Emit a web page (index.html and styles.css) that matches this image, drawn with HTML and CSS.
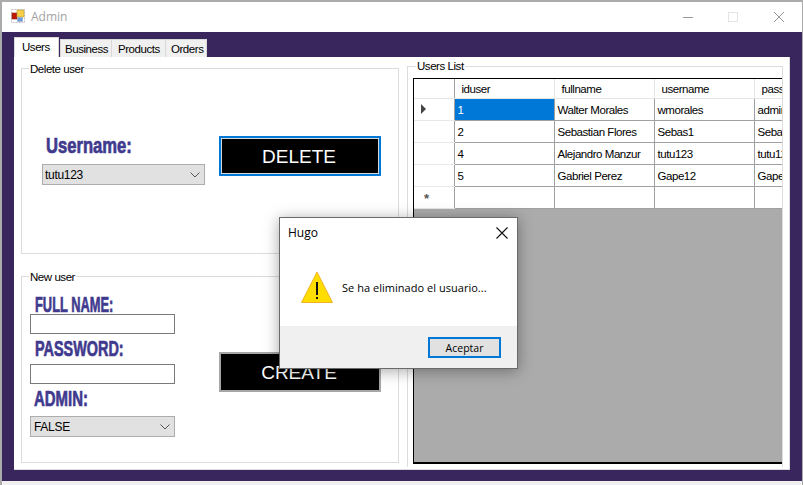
FILE: index.html
```html
<!doctype html>
<html lang="en">

<head>
    <meta charset="UTF-8">
    <title>Admin</title>
    <link rel="stylesheet" href="styles.css">
</head>

<body>
    <div class="window">
        <div class="titlebar">
            <svg class="app-icon" width="15" height="15" viewBox="0 0 15 15">
                <rect x="0.5" y="0.5" width="13" height="13" fill="none" stroke="#c4c4c4" stroke-dasharray="2 1"/>
                <rect x="1" y="4" width="5" height="6" fill="#c01808" stroke="#8c2010" stroke-width="0.6"/>
                <rect x="6" y="1" width="7" height="7" fill="#f8d048" stroke="#b89838" stroke-width="0.6"/>
                <rect x="6.5" y="8.5" width="5" height="4" fill="#6a9ce0" stroke="#98a8c0" stroke-width="0.6"/>
            </svg>
            <span class="app-title">Admin</span>
            <div class="window-controls">
                <svg width="10" height="10" viewBox="0 0 10 10"><path d="M0 5.5h10" stroke="#999"/></svg>
                <svg width="10" height="10" viewBox="0 0 10 10"><rect x="0.5" y="0.5" width="9" height="9" fill="none" stroke="#e4e4e4"/></svg>
                <svg class="close-icon" width="10" height="10" viewBox="0 0 10 10"><path d="M0 0l10 10M10 0L0 10" stroke="#999"/></svg>
            </div>
        </div>

        <div class="client">
            <div class="tabs">
                <div class="tab active">Users</div>
                <div class="tab">Business</div>
                <div class="tab">Products</div>
                <div class="tab">Orders</div>
            </div>

            <div class="panel">
                <div class="left-col">
                    <fieldset class="group delete-group">
                        <legend>Delete user</legend>
                        <div class="group-body">
                            <div class="field-col">
                                <div class="big-label username-label">Username:</div>
                                <div class="combo combo-wide"><span>tutu123</span><svg width="10" height="6" viewBox="0 0 10 6"><path d="M0.5 0.5L5 5l4.5-4.5" fill="none" stroke="#555"/></svg></div>
                            </div>
                            <button class="action-btn focused">DELETE</button>
                        </div>
                    </fieldset>

                    <fieldset class="group new-group">
                        <legend>New user</legend>
                        <div class="group-body">
                            <div class="field-col">
                                <div class="big-label fullname-label">FULL NAME:</div>
                                <input class="text-input" type="text">
                                <div class="big-label password-label">PASSWORD:</div>
                                <input class="text-input" type="text">
                                <div class="big-label admin-label">ADMIN:</div>
                                <div class="combo"><span>FALSE</span><svg width="10" height="6" viewBox="0 0 10 6"><path d="M0.5 0.5L5 5l4.5-4.5" fill="none" stroke="#555"/></svg></div>
                            </div>
                            <button class="action-btn create-btn">CREATE</button>
                        </div>
                    </fieldset>
                </div>

                <fieldset class="group list-group">
                    <legend>Users List</legend>
                    <div class="grid-view">
                        <table>
                            <thead>
                                <tr>
                                    <th class="row-head"></th>
                                    <th>iduser</th>
                                    <th>fullname</th>
                                    <th>username</th>
                                    <th>password</th>
                                </tr>
                            </thead>
                            <tbody>
                                <tr>
                                    <td class="row-head"><span class="row-arrow"></span></td>
                                    <td class="selected">1</td>
                                    <td>Walter Morales</td>
                                    <td>wmorales</td>
                                    <td>admin</td>
                                </tr>
                                <tr>
                                    <td class="row-head"></td>
                                    <td>2</td>
                                    <td>Sebastian Flores</td>
                                    <td>Sebas1</td>
                                    <td>Sebas1</td>
                                </tr>
                                <tr>
                                    <td class="row-head"></td>
                                    <td>4</td>
                                    <td>Alejandro Manzur</td>
                                    <td>tutu123</td>
                                    <td>tutu123</td>
                                </tr>
                                <tr>
                                    <td class="row-head"></td>
                                    <td>5</td>
                                    <td>Gabriel Perez</td>
                                    <td>Gape12</td>
                                    <td>Gape12</td>
                                </tr>
                                <tr>
                                    <td class="row-head new-row">*</td>
                                    <td></td>
                                    <td></td>
                                    <td></td>
                                    <td></td>
                                </tr>
                            </tbody>
                        </table>
                    </div>
                </fieldset>
            </div>
        </div>
        <div class="statusline"></div>

        <div class="dialog">
            <div class="dialog-head">
                <span>Hugo</span>
                <svg width="12" height="12" viewBox="0 0 12 12"><path d="M0.5 0.5l11 11M11.5 0.5l-11 11" stroke="#111" stroke-width="1.1"/></svg>
            </div>
            <div class="dialog-body">
                <svg width="32" height="32" viewBox="0 0 32 32">
                    <path d="M16 1L31.5 31.5H0.5Z" fill="#ffdd00" stroke="#f0b428"/>
                    <rect x="15" y="11" width="2" height="13" fill="#111"/>
                    <rect x="15" y="26" width="2" height="2" fill="#111"/>
                </svg>
                <span class="dialog-msg">Se ha eliminado el usuario...</span>
            </div>
            <div class="dialog-foot">
                <button class="dialog-btn">Aceptar</button>
            </div>
        </div>
    </div>
</body>
</html>
```

FILE: styles.css
```css
* {
    box-sizing: border-box;
}

html, body {
    margin: 0;
    padding: 0;
    overflow: hidden;
}

body {
    background-color: #f0f0f0;
    font-family: "Liberation Sans", Arial, sans-serif;
    font-size: 11.5px;
    letter-spacing: -0.45px;
    color: #000;
}

.window {
    position: relative;
    width: 803px;
    height: 485px;
    display: flex;
    flex-direction: column;
    border: solid #ababab;
    border-width: 2px 1px 0 2px;
}

/* title bar */

.titlebar {
    height: 30px;
    flex: none;
    display: flex;
    align-items: center;
    padding-left: 9px;
    padding-bottom: 1px;
    background-color: #fff;
}

.app-title {
    margin-left: 5px;
    font-family: "Open Sans", sans-serif;
    font-size: 12px;
    letter-spacing: 0;
    color: #a3a3a3;
}

.window-controls {
    margin-left: auto;
    display: flex;
    gap: 35px;
    padding-right: 18px;
}

.close-icon {
    margin-left: 1px;
}

/* purple client area */

.client {
    flex: none;
    height: 449px;
    padding: 5px 12px 0;
    background-color: #39265c;
}

.tabs {
    height: 20px;
    display: flex;
    align-items: flex-end;
}

.tab {
    height: 18px;
    padding: 0 4px;
    line-height: 18px;
    background-color: #f0f0f0;
    border: solid #d9d9d9;
    border-width: 1px 1px 0 1px;
    margin-left: -1px;
}

.tab:nth-child(2) { width: 52px; margin-left: 1px; padding-left: 4px; }
.tab:nth-child(3) { width: 55px; padding-left: 6px; }
.tab:nth-child(4) { width: 42px; padding-left: 5px; }

.tab.active {
    width: 45px;
    height: 20px;
    margin-left: 0;
    padding-left: 7px;
    background-color: #fff;
}

.panel {
    width: 776px;
    height: 413px;
    padding: 2px 0 0 7px;
    display: flex;
    gap: 8px;
    background-color: #fff;
    border: solid #dcdcdc;
    border-width: 0 1px 1px 0;
}

.left-col {
    width: 378px;
    flex: none;
    display: flex;
    flex-direction: column;
    gap: 15px;
    padding-top: 2px;
}

/* group boxes */

.group {
    margin: 0;
    padding: 0;
    min-width: 0;
    border: 1px solid #dcdcdc;
}

.group legend {
    margin-left: 7px;
    padding: 0 1px;
    height: 14px;
    line-height: 16px;
}

.group-body {
    display: flex;
}

.delete-group {
    height: 193px;
}

.delete-group .group-body {
    padding: 61px 0 0 20px;
}

.new-group {
    height: 194px;
}

.new-group .group-body {
    padding: 13px 0 0 8px;
}

.list-group {
    width: 376px;
    height: 408px;
    padding: 5px 0 0 5px;
    border-bottom: 0;
}

.list-group legend {
    margin-left: 3px;
    line-height: 14px;
}

.field-col {
    display: flex;
    flex-direction: column;
}

/* stands in for the heavy condensed face of the original */
.big-label {
    width: fit-content;
    height: 18px;
    font-weight: bold;
    font-size: 22px;
    line-height: 18px;
    letter-spacing: 0;
    white-space: nowrap;
    color: #3f3a8e;
    -webkit-text-stroke: 0.7px #3f3a8e;
    transform-origin: left center;
}

.username-label {
    height: 28px;
    margin-left: 4px;
    line-height: 20px;
    transform: scaleX(0.755);
}

.fullname-label {
    margin-left: 5px;
    transform: scaleX(0.585);
}

.password-label {
    margin: 6px 0 6px 5px;
    transform: scaleX(0.655);
}

.admin-label {
    margin: 6px 0 8px 4px;
    transform: scaleX(0.68);
}

.combo {
    width: 145px;
    height: 21px;
    display: flex;
    align-items: center;
    justify-content: space-between;
    padding: 0 4px 0 3px;
    font-size: 12px;
    letter-spacing: -0.3px;
    background-color: #e1e1e1;
    border: 1px solid #adadad;
}

.combo-wide {
    width: 163px;
    padding-left: 2px;
}

.text-input {
    width: 145px;
    height: 20px;
    margin: 0;
    padding: 0;
    background-color: #fff;
    border: 1px solid #7a7a7a;
    border-radius: 0;
}

.action-btn {
    width: 162px;
    height: 40px;
    margin: 0 0 0 14px;
    padding: 1px 2px 0 0;
    font-family: "Liberation Sans", sans-serif;
    font-size: 19px;
    letter-spacing: 0;
    color: #fff;
    background-color: #000;
    border: 2px solid #a6a6a6;
    border-radius: 0;
}

.action-btn.focused {
    border-color: #0078d7;
    outline: 1px solid #d8d8d8;
    outline-offset: -3px;
}

.create-btn {
    margin-left: 44px;
    margin-top: 56px;
}

/* data grid */

.grid-view {
    width: 369px;
    height: 386px;
    overflow: hidden;
    background-color: #ababab;
    border: solid #000;
    border-width: 1px 0 2px 1px;
}

.grid-view table {
    width: 368px;
    border-collapse: collapse;
    table-layout: fixed;
}

.grid-view th,
.grid-view td {
    width: 100px;
    height: 22px;
    padding: 1px 0 0 3px;
    overflow: hidden;
    white-space: nowrap;
    text-align: left;
    font-weight: normal;
    background-color: #fff;
    border: 1px solid #a0a0a0;
}

.grid-view th {
    height: 19px;
    padding-left: 7px;
    border-top: 0;
    border-color: #e4e4e4;
}

.grid-view .row-head {
    width: 40px;
    padding: 0;
    border-left: 0;
    border-top-color: #e8e8e8;
    border-bottom-color: #e8e8e8;
}

.grid-view th.row-head {
    border-color: #e4e4e4;
    border-right-color: #a0a0a0;
}

.grid-view td.row-head {
    border-right-color: #a0a0a0;
}

.grid-view td.selected {
    color: #fff;
    background-color: #0078d7;
}

.row-arrow {
    display: block;
    width: 0;
    height: 0;
    margin-left: 7px;
    border-left: 5px solid #444;
    border-top: 5px solid transparent;
    border-bottom: 5px solid transparent;
}

.grid-view td.new-row {
    padding: 3px 0 0 10px;
    font-size: 13px;
    font-weight: bold;
    color: #555;
}

.statusline {
    flex: 1;
    background-color: #f0f0f0;
}

/* message box */

.dialog {
    position: absolute;
    left: 277px;
    top: 215px;
    width: 239px;
    height: 152px;
    display: flex;
    flex-direction: column;
    font-family: "Open Sans", sans-serif;
    letter-spacing: 0;
    background-color: #fff;
    border: 1px solid #6a6a6a;
    box-shadow: 0 2px 14px rgba(0, 0, 0, 0.35);
}

.dialog-head {
    height: 30px;
    display: flex;
    align-items: center;
    justify-content: space-between;
    padding: 0 9px 1px 8px;
    font-size: 12px;
}

.dialog-body {
    flex: 1;
    display: flex;
    align-items: center;
    padding-left: 21px;
}

.dialog-msg {
    margin-left: 9px;
    font-size: 11px;
    letter-spacing: 0.03px;
}

.dialog-foot {
    height: 42px;
    flex: none;
    display: flex;
    justify-content: flex-end;
    padding: 11px 16px 0 0;
    background-color: #f0f0f0;
}

.dialog-btn {
    width: 73px;
    height: 21px;
    padding: 0;
    font-family: "Open Sans", sans-serif;
    font-size: 10.5px;
    background-color: #e1e1e1;
    border: 2px solid #0078d7;
    border-radius: 0;
}
```
